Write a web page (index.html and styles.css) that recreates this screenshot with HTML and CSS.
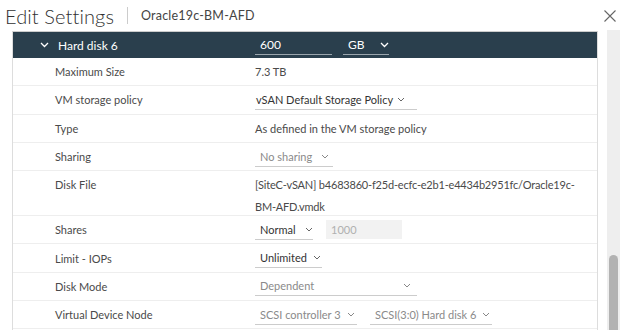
FILE: index.html
```html
<!DOCTYPE html>
<html>
<head>
<meta charset="utf-8">
<link rel="stylesheet" href="styles.css">
</head>
<body>
<div class="titlebar">
  <h1 class="title">Edit Settings</h1>
  <span class="sep"></span>
  <span class="subtitle">Oracle19c-BM-AFD</span>
  <svg class="close" width="12" height="12" viewBox="0 0 12 12"><path d="M0.5 0.5 L11.5 11.5 M11.5 0.5 L0.5 11.5" stroke="#666" stroke-width="1.1" fill="none"/></svg>
</div>
<div class="body">
  <div class="panel">
    <div class="head">
      <div class="head-label">
        <svg class="chev" width="9" height="6" viewBox="0 0 9 6"><path d="M1 1 L4.5 4.5 L8 1" stroke="#fff" stroke-width="1.3" fill="none"/></svg>
        <span>Hard disk 6</span>
      </div>
      <div class="head-ctrls">
        <span class="hinput w-size">600</span>
        <span class="hinput w-unit">GB <svg class="chev-s" width="9" height="6" viewBox="0 0 9 6"><path d="M1 1 L4.5 4.5 L8 1" stroke="#fff" stroke-width="1.3" fill="none"/></svg></span>
      </div>
    </div>
    <div class="row">
      <div class="label">Maximum Size</div>
      <div class="value">7.3 TB</div>
    </div>
    <div class="row">
      <div class="label">VM storage policy</div>
      <div class="value"><span class="sel tight w-policy">vSAN Default Storage Policy<svg class="dchev" width="8" height="5" viewBox="0 0 8 5"><path d="M1 1 L4 4 L7 1" stroke="#666" stroke-width="1" fill="none"/></svg></span></div>
    </div>
    <div class="row">
      <div class="label">Type</div>
      <div class="value">As defined in the VM storage policy</div>
    </div>
    <div class="row">
      <div class="label">Sharing</div>
      <div class="value"><span class="sel dis w-share">No sharing<svg class="dchev" width="8" height="5" viewBox="0 0 8 5"><path d="M1 1 L4 4 L7 1" stroke="#888" stroke-width="1" fill="none"/></svg></span></div>
    </div>
    <div class="row tall">
      <div class="label">Disk File</div>
      <div class="value wrap">[SiteC-vSAN] b4683860-f25d-ecfc-e2b1-e4434b2951fc/Oracle19c-<br>BM-AFD.vmdk</div>
    </div>
    <div class="row">
      <div class="label">Shares</div>
      <div class="value"><span class="sel w-shares">Normal<svg class="dchev" width="8" height="5" viewBox="0 0 8 5"><path d="M1 1 L4 4 L7 1" stroke="#666" stroke-width="1" fill="none"/></svg></span><span class="num">1000</span></div>
    </div>
    <div class="row">
      <div class="label">Limit - IOPs</div>
      <div class="value"><span class="sel w-limit">Unlimited<svg class="dchev" width="8" height="5" viewBox="0 0 8 5"><path d="M1 1 L4 4 L7 1" stroke="#666" stroke-width="1" fill="none"/></svg></span></div>
    </div>
    <div class="row">
      <div class="label">Disk Mode</div>
      <div class="value"><span class="sel dis w-mode">Dependent<svg class="dchev right" width="8" height="5" viewBox="0 0 8 5"><path d="M1 1 L4 4 L7 1" stroke="#888" stroke-width="1" fill="none"/></svg></span></div>
    </div>
    <div class="row">
      <div class="label">Virtual Device Node</div>
      <div class="value"><span class="sel dis w-ctrl">SCSI controller 3<svg class="dchev" width="8" height="5" viewBox="0 0 8 5"><path d="M1 1 L4 4 L7 1" stroke="#888" stroke-width="1" fill="none"/></svg></span><span class="sel dis w-node">SCSI(3:0) Hard disk 6<svg class="dchev" width="8" height="5" viewBox="0 0 8 5"><path d="M1 1 L4 4 L7 1" stroke="#888" stroke-width="1" fill="none"/></svg></span></div>
    </div>
  </div>
  <div class="scroll"><div class="thumb"></div></div>
</div>
</body>
</html>
```
FILE: styles.css
```css
* { box-sizing: border-box; }
html, body { margin: 0; padding: 0; background: #fff; overflow: hidden; }
body {
  width: 624px; height: 330px;
  font-family: "Lato", "Open Sans", sans-serif;
  color: #4a4a4a;
  font-size: 11px;
}
.titlebar {
  height: 31px;
  display: flex;
  align-items: center;
  padding-left: 5px;
}
.title {
  margin: 0;
  font-weight: 300;
  font-size: 20px;
  letter-spacing: 0.1px;
  color: #313131;
  line-height: 24px;
}
.sep {
  width: 1px; height: 17px;
  background: #ccc;
  margin: 0 13px 0 13px;
}
.subtitle { font-size: 12.5px; color: #444; letter-spacing: 0.2px; }
.close { margin-left: auto; margin-right: 8px; }

.body { display: flex; height: 299px; }
.panel {
  margin-left: 12px;
  width: 586px;
  border-left: 1px solid #ddd;
  border-right: 1px solid #ddd;
  border-top: 1px solid #ccc;
  overflow: hidden;
}
.head {
  height: 26px;
  background: #2a3f4d;
  color: #fff;
  display: grid;
  grid-template-columns: 242px 1fr;
  align-items: center;
  font-size: 12px;
}
.head-label { display: flex; align-items: center; padding-left: 27px; }
.chev { margin-right: 9px; }
.head-ctrls { display: flex; gap: 11px; align-items: center; }
.hinput {
  display: flex; align-items: center;
  height: 19px;
  padding-left: 5px;
  border-bottom: 1px solid #9aa5ad;
}
.w-size { width: 77px; }
.w-unit { width: 46px; }
.w-unit .chev-s { margin-left: 15px; }

.row {
  height: 28.3px;
  display: grid;
  grid-template-columns: 242px 1fr;
  align-items: center;
  border-bottom: 1px solid #eee;
}
.row.tall { height: 45px; align-items: start; padding-top: 3px; }
.label { padding-left: 42px; }
.value { display: flex; align-items: center; gap: 13px; }
.value.wrap { display: block; line-height: 22px; letter-spacing: -0.2px; }
.row.tall .label { line-height: 22px; }
.sel {
  display: inline-flex; align-items: center;
  height: 20px;
  padding-left: 5px;
  border-bottom: 1px solid #ccc;
  color: #333;
}
.sel.tight { padding-left: 1px; }
.sel.dis { color: #8a8a8a; }
.dchev { margin-left: 4px; }
.w-policy { width: 162px; }
.w-share { width: 78px; }
.w-share .dchev { margin-left: 9px; }
.w-shares { width: 58px; }
.w-shares .dchev { margin-left: 9px; }
.w-limit { width: 67px; }
.w-limit .dchev { margin-left: 6px; }
.w-mode { width: 162px; }
.w-mode .dchev { margin-left: auto; margin-right: 6px; }
.w-ctrl { width: 102px; }
.w-ctrl .dchev { margin-left: 6px; }
.w-node { width: 122px; }
.w-node .dchev { margin-left: 6px; }
.num {
  width: 76px; height: 19px;
  background: #f2f2f2;
  color: #b0b0b0;
  padding-left: 5px;
  display: flex; align-items: center;
}
.scroll {
  margin-left: 9px;
  width: 13px;
  height: 300px;
  margin-top: -1px;
  background: #eeeeee;
  position: relative;
}
.thumb {
  position: absolute;
  left: 2px; right: 2px;
  top: 225px; bottom: -10px;
  background: #b2b2b2;
  border-radius: 5px;
}
```
